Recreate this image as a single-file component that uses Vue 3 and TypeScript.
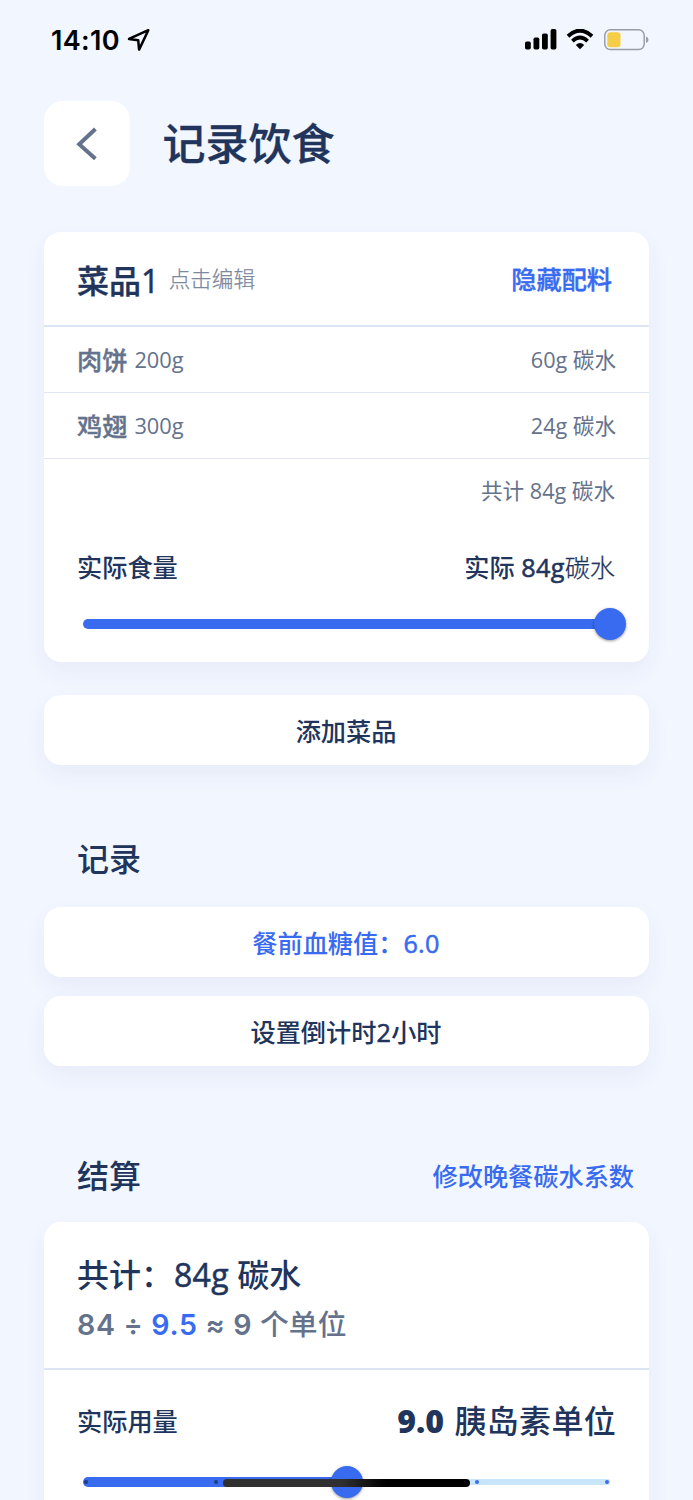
<script setup lang="ts">
interface Ingredient {
  name: string
  weight: number
  carbs: number
}

const ingredients: Ingredient[] = [
  { name: '肉饼', weight: 200, carbs: 60 },
  { name: '鸡翅', weight: 300, carbs: 24 },
]
const total = ingredients.reduce((sum, item) => sum + item.carbs, 0)
const doseMarks: number[] = [0, 25, 50, 75, 100]
</script>

<template>
  <div class="page">
    <div class="status">
      <div class="status-left">
        <span class="clock">14:10</span>
        <svg class="locate" width="24" height="24" viewBox="0 0 24 24">
          <path d="M21.3 2.2 2 10.9l9.2 1.3.9 9.4Z" fill="none" stroke="#000" stroke-width="2.5" stroke-linejoin="round" />
        </svg>
      </div>
      <div class="status-right">
        <svg width="33" height="21" viewBox="0 0 33 21">
          <rect x="0" y="12.5" width="5.8" height="8" rx="1.7" />
          <rect x="8.5" y="8.5" width="5.8" height="12" rx="1.7" />
          <rect x="17" y="4.5" width="5.8" height="16" rx="1.7" />
          <rect x="25.6" y="0" width="5.8" height="20.5" rx="1.7" />
        </svg>
        <svg class="wifi" width="28" height="21" viewBox="0 0 28 21">
          <path d="M2 7.2Q14-3.8 26 7.2" fill="none" stroke="#000" stroke-width="4" />
          <path d="M6.4 12.1Q14 5 21.6 12.1" fill="none" stroke="#000" stroke-width="3.8" />
          <path d="M9.8 16Q14 12.2 18.2 16L14 20.2Z" />
        </svg>
        <svg class="battery" width="45" height="22" viewBox="0 0 45 22">
          <rect x=".8" y=".8" width="39.4" height="19.8" rx="5.5" fill="none" stroke="#9a9da5" stroke-width="1.5" />
          <rect x="3.3" y="3.2" width="13.2" height="15" rx="3" fill="#f5cd46" />
          <path d="M42 7.5q2.5 1 2.5 3.3T42 14Z" fill="#9a9da5" />
        </svg>
      </div>
    </div>

    <header class="header">
      <button class="back" type="button">
        <svg width="22" height="34" viewBox="0 0 22 34">
          <path d="M19.4 2 3.2 17.2l16.2 14.6" fill="none" stroke="#65728c" stroke-width="4" />
        </svg>
      </button>
      <h1 class="title">记录饮食</h1>
    </header>

    <section class="card dish">
      <div class="dish-head">
        <h2 class="dish-name">菜品<span class="num">1</span></h2>
        <span class="hint">点击编辑</span>
        <a class="link toggle">隐藏配料</a>
      </div>
      <div v-for="item in ingredients" :key="item.name" class="row">
        <span class="food">{{ item.name }}</span>
        <span class="weight">{{ item.weight }}g</span>
        <span class="carbs">{{ item.carbs }}g 碳水</span>
      </div>
      <div class="row sum"><span class="carbs">共计 {{ total }}g 碳水</span></div>
      <div class="amount">
        <span>实际食量</span>
        <span>实际 <span class="num">{{ total }}g</span><span class="thin">碳水</span></span>
      </div>
      <div class="slider">
        <div class="fill" :style="{ width: '100%' }"></div>
        <div class="thumb" :style="{ left: '100%' }"></div>
      </div>
    </section>

    <button class="card wide add" type="button">添加菜品</button>

    <div class="section-head record-head"><h2>记录</h2></div>
    <button class="card wide blue" type="button">餐前血糖值：<span class="num">6.0</span></button>
    <button class="card wide timer" type="button">设置倒计时<span class="num">2</span>小时</button>

    <div class="section-head settle-head">
      <h2>结算</h2>
      <a class="link">修改晚餐碳水系数</a>
    </div>
    <section class="card settle">
      <div class="summary">
        <div class="summary-total">共计：<span class="num">{{ total }}g</span> 碳水</div>
        <div class="formula">84 ÷ <span class="factor">9.5</span> ≈ 9 <span class="units">个单位</span></div>
      </div>
      <div class="dose">
        <span>实际用量</span>
        <span class="dose-value"><b>9.0</b> 胰岛素单位</span>
      </div>
      <div class="slider dose-slider">
        <div class="rail"></div>
        <div class="fill" :style="{ width: '50%' }"></div>
        <i
          v-for="mark in doseMarks"
          :key="mark"
          class="mark"
          :class="{ ahead: mark > 50 }"
          :style="{ left: `calc(3px + (100% - 6px) * ${mark / 100})` }"
        ></i>
        <div class="thumb" :style="{ left: '50%' }"></div>
      </div>
    </section>
    <div class="home-bar"></div>
  </div>
</template>

<style>
body {
  background: #f1f6ff;
}
</style>

<style scoped>
.page {
  position: relative;
  display: flex;
  flex-direction: column;
  box-sizing: border-box;
  width: 693px;
  height: 1500px;
  padding: 0 44px;
  overflow: hidden;
  background: #f1f6ff;
  color: #21345c;
  font-family: "Open Sans", "Noto Sans CJK SC", sans-serif;
  font-size: 25.2px;
  font-weight: 500;
}
.page > * {
  flex-shrink: 0;
}
h1,
h2 {
  margin: 0;
  font-weight: 500;
}
button {
  border: 0;
  padding: 0;
  font: inherit;
  color: inherit;
}
.num {
  letter-spacing: 0.3px;
  -webkit-text-stroke: 0.55px currentColor;
}
.status {
  display: flex;
  justify-content: space-between;
  height: 101px;
  color: #000;
}
.status-left,
.status-right {
  display: flex;
  align-items: center;
  height: 79px;
}
.clock {
  margin-left: 7px;
  padding-top: 1px;
  font: 600 27px/1 Inter, sans-serif;
  letter-spacing: 0.3px;
}
.locate {
  margin-left: 7px;
}
.wifi {
  margin: 0 10px 0 8px;
}
.header {
  display: flex;
  align-items: center;
  height: 85px;
}
.back {
  display: flex;
  align-items: center;
  justify-content: center;
  width: 85.5px;
  height: 85.5px;
  border-radius: 19px;
  background: #fff;
}
.title {
  margin-left: 33px;
  font-size: 43px;
  line-height: 60px;
  -webkit-text-stroke: 0.3px currentColor;
}
.card {
  border-radius: 17px;
  background: #fff;
  box-shadow: 0 10px 24px rgba(60, 50, 120, 0.055);
}
.dish {
  height: 430px;
  margin-top: 46px;
}
.dish-head {
  display: flex;
  align-items: center;
  box-sizing: border-box;
  height: 95px;
  padding: 0 37px 0 33px;
  border-bottom: 2px solid #dce5f4;
}
.dish-name {
  padding-top: 4px;
  font-size: 32px;
  line-height: 40px;
  -webkit-text-stroke: 0.4px currentColor;
}
.hint {
  margin-left: 9px;
  padding-bottom: 2px;
  color: #7c88a0;
  font-size: 21.6px;
  font-weight: 300;
  -webkit-text-stroke: 0.25px currentColor;
}
.link {
  padding-bottom: 2px;
  color: #396bf0;
}
.toggle {
  margin-left: auto;
  padding-bottom: 1px;
  -webkit-text-stroke: 0.4px currentColor;
}
.row {
  display: flex;
  align-items: center;
  box-sizing: border-box;
  height: 66px;
  padding: 0 33px;
  border-bottom: 1px solid #dfe6f4;
  color: #65728c;
}
.food {
  padding-bottom: 1px;
  -webkit-text-stroke: 0.4px currentColor;
}
.weight {
  margin-left: 7px;
  font-size: 21.8px;
  font-weight: 400;
}
.carbs {
  margin-left: auto;
  padding-bottom: 3px;
  font-size: 21.6px;
  font-weight: 370;
}
.sum {
  padding-right: 34px;
  border: 0;
}
.sum .carbs {
  padding-bottom: 5px;
}
.amount {
  display: flex;
  align-items: center;
  justify-content: space-between;
  box-sizing: border-box;
  height: 86px;
  padding: 0 34px 4px 33px;
}
.thin {
  font-weight: 300;
  -webkit-text-stroke: 0.25px currentColor;
}
.slider {
  position: relative;
  height: 10px;
  margin: 8px 39px 0;
}
.fill {
  position: relative;
  height: 10px;
  border-radius: 5px;
  background: #396bf0;
}
.thumb {
  position: absolute;
  top: -11px;
  width: 32px;
  height: 32px;
  margin-left: -16px;
  border-radius: 50%;
  background: #396bf0;
  box-shadow: 0 1px 3px rgba(0, 0, 0, 0.4);
}
.wide {
  height: 70px;
  padding: 0 1px 1px 0;
}
.add {
  margin-top: 33px;
}
.section-head {
  display: flex;
  align-items: center;
  justify-content: space-between;
  height: 60px;
  padding: 0 15px 0 33px;
}
.section-head h2 {
  padding-bottom: 5px;
  font-size: 32px;
}
.record-head {
  margin: 64px 0 18px;
}
.blue {
  color: #396bf0;
}
.timer {
  margin-top: 19px;
}
.settle-head {
  margin: 80px 0 16px;
}
.settle {
  height: 340px;
}
.summary {
  box-sizing: border-box;
  height: 148px;
  padding: 28px 33px 0;
  border-bottom: 2px solid #dde4f1;
}
.summary-total {
  font-size: 32px;
  line-height: 49px;
}
.summary-total .num {
  margin-left: 1px;
}
.formula {
  height: 52px;
  color: #65728c;
  font: 600 28.6px/52px Inter, "Noto Sans CJK SC", sans-serif;
  letter-spacing: 0.65px;
}
.factor {
  color: #396bf0;
}
.units {
  font-size: 28.8px;
  font-weight: 500;
  letter-spacing: 0.1px;
}
.dose {
  display: flex;
  align-items: center;
  justify-content: space-between;
  box-sizing: border-box;
  height: 102px;
  padding: 0 33px 2px;
}
.dose-value {
  padding-bottom: 3px;
  font-size: 32px;
  letter-spacing: 0.3px;
}
.dose-value b {
  margin-right: 2px;
  font-weight: 800;
  letter-spacing: 0;
}
.dose-slider {
  margin-top: 5px;
}
.rail {
  position: absolute;
  top: 2px;
  right: 0;
  width: 50%;
  height: 6px;
  border-radius: 2px;
  background: #c8e6fb;
}
.mark {
  position: absolute;
  top: 3px;
  width: 4px;
  height: 4px;
  margin-left: -2px;
  border-radius: 50%;
  background: #213a82;
}
.mark.ahead {
  background: #396bf0;
}
.home-bar {
  position: absolute;
  left: 223px;
  top: 1479px;
  width: 247px;
  height: 8px;
  border-radius: 4px;
  background: linear-gradient(90deg, #303030 48%, #000 66%);
}
</style>
